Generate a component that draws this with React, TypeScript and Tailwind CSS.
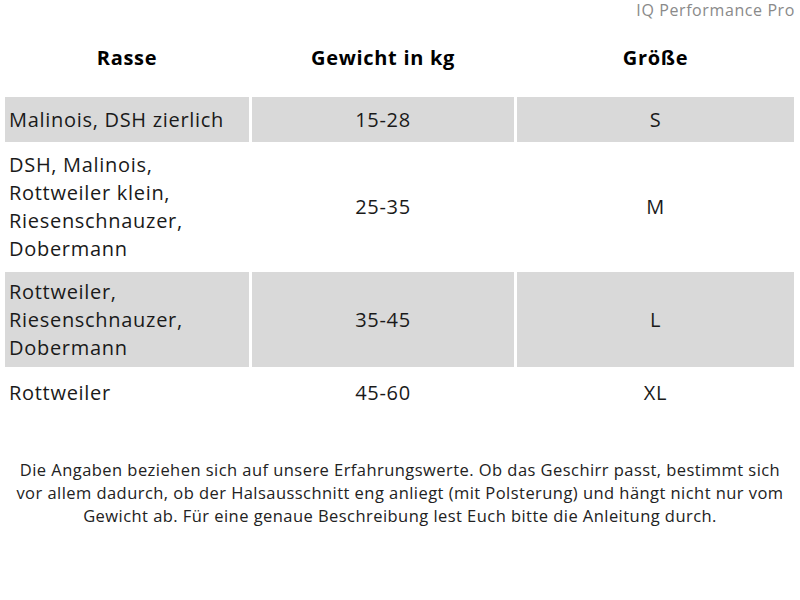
import React from "react"

const rows = [
  { breed: ["Malinois, DSH zierlich"], weight: "15-28", size: "S", h: "h-[45px]", shaded: true },
  { breed: ["DSH, Malinois,", "Rottweiler klein,", "Riesenschnauzer,", "Dobermann"], weight: "25-35", size: "M", h: "h-[124px]", shaded: false },
  { breed: ["Rottweiler,", "Riesenschnauzer,", "Dobermann"], weight: "35-45", size: "L", h: "h-[95px]", shaded: true },
  { breed: ["Rottweiler"], weight: "45-60", size: "XL", h: "h-[46px]", shaded: false },
]

const note = [
  "Die Angaben beziehen sich auf unsere Erfahrungswerte. Ob das Geschirr passt, bestimmt sich",
  "vor allem dadurch, ob der Halsausschnitt eng anliegt (mit Polsterung) und hängt nicht nur vom",
  "Gewicht ab. Für eine genaue Beschreibung lest Euch bitte die Anleitung durch.",
]

export default function App() {
  return (
    <div className="w-[800px] h-[600px] bg-white font-['Open_Sans',sans-serif] text-[#1a1a1a]">
      <div className="h-[22px] pt-[1px] pr-[5px] text-right text-[16px] leading-[19px] tracking-[0.6px] text-[#8a8a8a]">
        IQ Performance Pro
      </div>

      <div className="ml-[5px] grid grid-cols-[244px_262px_277px] gap-[3px] text-[20px] tracking-[0.7px]">
        <div className="h-[72px] flex items-center justify-center font-bold text-black">Rasse</div>
        <div className="h-[72px] flex items-center justify-center font-bold text-black">Gewicht in kg</div>
        <div className="h-[72px] flex items-center justify-center font-bold text-black">Größe</div>

        {rows.map((r) => (
          <React.Fragment key={r.weight}>
            <div className={`${r.h} ${r.shaded ? "bg-[#d9d9d9]" : "bg-white"} flex flex-col justify-center px-[4px] leading-[28px]`}>
              {r.breed.map((line) => (
                <span key={line} className="whitespace-nowrap">{line}</span>
              ))}
            </div>
            <div className={`${r.h} ${r.shaded ? "bg-[#d9d9d9]" : "bg-white"} flex items-center justify-center`}>
              {r.weight}
            </div>
            <div className={`${r.h} ${r.shaded ? "bg-[#d9d9d9]" : "bg-white"} flex items-center justify-center`}>
              {r.size}
            </div>
          </React.Fragment>
        ))}
      </div>

      <div className="mt-[42px] flex flex-col items-center text-[16.5px] leading-[23px] tracking-[0.45px] text-[#222]">
        {note.map((line) => (
          <span key={line} className="whitespace-nowrap">{line}</span>
        ))}
      </div>
    </div>
  )
}
